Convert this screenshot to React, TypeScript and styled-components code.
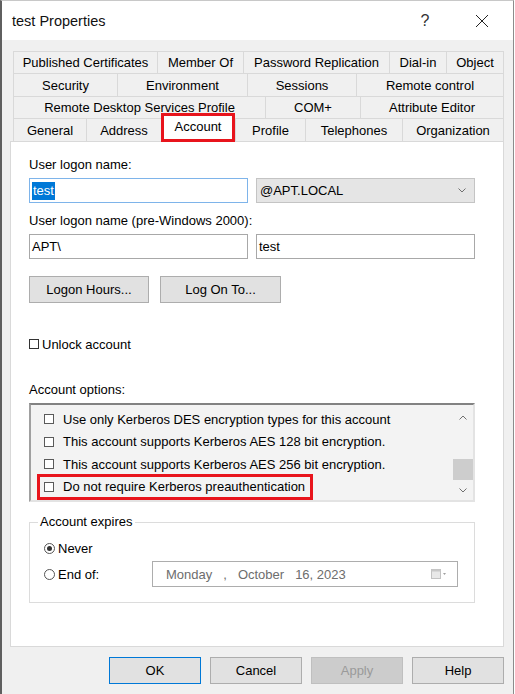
import React from "react";
import styled, { createGlobalStyle } from "styled-components";

const GlobalStyle = createGlobalStyle`
  html, body {
    margin: 0;
    padding: 0;
    background: #fff;
  }
  body {
    font-family: "Liberation Sans", Arial, sans-serif;
    font-size: 13px;
    color: #000;
  }
  * {
    box-sizing: border-box;
  }
`;

const Window = styled.div`
  width: 514px;
  height: 694px;
  display: flex;
  flex-direction: column;
  background: #f0f0f0;
  border-top: 1px solid #c8c8c8;
  border-left: 2px solid #5f5f5f;
  border-right: 1px solid #8c8c8c;
`;

const TitleBar = styled.div`
  height: 39px;
  flex-shrink: 0;
  display: flex;
  align-items: center;
  background: #fff;
  padding-left: 10px;
`;

const TitleText = styled.div`
  flex: 1;
  font-size: 14.5px;
  color: #111;
`;

const CaptionButtons = styled.div`
  display: flex;
  gap: 11px;
  margin-right: 8px;
`;

const CaptionButton = styled.div`
  width: 46px;
  height: 30px;
  display: flex;
  align-items: center;
  justify-content: center;
  font-size: 16px;
  color: #333;
`;

const Body = styled.div`
  flex: 1;
  display: flex;
  flex-direction: column;
  padding: 11px 9px 10px 8px;
`;

const TabStrip = styled.div`
  display: grid;
  grid-template-rows: 22px 23px 22px 23px;
  margin: 0 0 0 3px;
`;

const TabRow = styled.div`
  display: flex;
`;

const Tab = styled.div<{ $w?: number; $active?: boolean }>`
  ${(p) => (p.$w ? `width: ${p.$w}px;` : "flex: 1;")}
  display: flex;
  align-items: center;
  justify-content: center;
  white-space: nowrap;
  border-top: 1px solid #d9d9d9;
  border-left: 1px solid #d9d9d9;
  &:last-child {
    border-right: 1px solid #d9d9d9;
  }
  ${(p) =>
    p.$active &&
    `
    position: relative;
    z-index: 2;
    align-self: flex-start;
    height: 29px;
    margin-top: -5px;
    padding-bottom: 3px;
    background: #fff;
    border: 3px solid #e8141c;
  `}
`;

const Panel = styled.div`
  flex: 1;
  display: flex;
  flex-direction: column;
  background: #fff;
  border: 1px solid #d9d9d9;
  padding: 15px 28px 0 18px;
`;

const FieldLabel = styled.div<{ $top?: number }>`
  line-height: 16px;
  height: 16px;
  margin-top: ${(p) => p.$top ?? 0}px;
  margin-bottom: 5px;
`;

const FieldRow = styled.div`
  display: grid;
  grid-template-columns: 1fr 1fr;
  gap: 8px;
  height: 25px;
`;

const TextBox = styled.div<{ $focused?: boolean }>`
  display: flex;
  align-items: center;
  padding-left: 2px;
  border: 1px solid ${(p) => (p.$focused ? "#7eb4ea" : "#a8a8a8")};
  background: #fff;
`;

const Selected = styled.span`
  background: #0078d7;
  color: #fff;
  line-height: 18px;
  padding: 0 1px;
`;

const ComboBox = styled.div`
  display: flex;
  align-items: center;
  justify-content: space-between;
  padding: 0 8px 0 3px;
  border: 1px solid #c4c4c4;
  background: #e5e5e5;
`;

const ButtonRow = styled.div`
  display: flex;
  gap: 11px;
  margin-top: 17px;
`;

const PushButton = styled.div<{ $w: number; $default?: boolean; $disabled?: boolean }>`
  width: ${(p) => p.$w}px;
  height: 27px;
  display: flex;
  align-items: center;
  justify-content: center;
  background: ${(p) => (p.$disabled ? "#cccccc" : "#e1e1e1")};
  color: ${(p) => (p.$disabled ? "#9a9a9a" : "#000")};
  border: 1px solid
    ${(p) => (p.$default ? "#0078d7" : p.$disabled ? "#bfbfbf" : "#adadad")};
`;

const CheckLine = styled.div<{ $top?: number }>`
  display: flex;
  align-items: center;
  gap: 3px;
  height: 16px;
  margin-top: ${(p) => p.$top ?? 0}px;
`;

const CheckBox = styled.span<{ $light?: boolean }>`
  width: 10px;
  height: 10px;
  flex-shrink: 0;
  background: #fff;
  border: 1px solid ${(p) => (p.$light ? "#5a5a5a" : "#333")};
`;

const ListBox = styled.div`
  height: 99px;
  display: flex;
  background: #f3f3f3;
  border-style: solid;
  border-width: 2px;
  border-color: #828282 #e3e3e3 #e3e3e3 #a0a0a0;
`;

const ListItems = styled.div`
  flex: 1;
  padding-top: 3px;
  overflow: hidden;
`;

const OptionItem = styled.div<{ $marked?: boolean }>`
  height: 22.5px;
  width: fit-content;
  display: flex;
  align-items: center;
  gap: 9px;
  margin-left: 8px;
  padding: 0 6px 0 5px;
  white-space: nowrap;
  outline: ${(p) => (p.$marked ? "3px solid #e8141c" : "none")};
  outline-offset: -1px;
`;

const ScrollBar = styled.div`
  width: 20px;
  display: flex;
  flex-direction: column;
`;

const ScrollArrow = styled.div<{ $h: number }>`
  height: ${(p) => p.$h}px;
  display: flex;
  align-items: center;
  justify-content: center;
`;

const ScrollTrack = styled.div`
  flex: 1;
  display: flex;
  flex-direction: column;
  justify-content: flex-end;
`;

const ScrollThumb = styled.div`
  height: 21px;
  background: #cdcdcd;
`;

const GroupBox = styled.fieldset`
  margin: 12px 0 0 0;
  padding: 0;
  min-width: 0;
  border: 1px solid #dcdcdc;
`;

const GroupLegend = styled.legend`
  margin-left: 8px;
  padding: 0 2px;
  line-height: 16px;
`;

const GroupContent = styled.div`
  padding: 10px 16px 15px 14px;
`;

const RadioLine = styled.div<{ $top?: number; $h: number }>`
  display: flex;
  align-items: center;
  height: ${(p) => p.$h}px;
  margin-top: ${(p) => p.$top ?? 0}px;
`;

const RadioLabel = styled.div<{ $w?: number }>`
  display: flex;
  align-items: center;
  gap: 3px;
  ${(p) => p.$w && `width: ${p.$w}px; flex-shrink: 0;`}
`;

const Radio = styled.span<{ $checked?: boolean }>`
  width: 11px;
  height: 11px;
  border-radius: 50%;
  border: 1px solid #555;
  background: #fff;
  display: flex;
  align-items: center;
  justify-content: center;
  &::after {
    content: "";
    width: 5px;
    height: 5px;
    border-radius: 50%;
    background: ${(p) => (p.$checked ? "#333" : "transparent")};
  }
`;

const DatePicker = styled.div`
  flex: 1;
  height: 26px;
  display: flex;
  align-items: center;
  gap: 11px;
  padding: 0 10px 0 13px;
  border: 1px solid #adadad;
  background: #fff;
  color: #6d6d6d;
`;

const CalendarIcon = styled.svg`
  margin-left: auto;
`;

const DialogButtons = styled.div`
  display: flex;
  justify-content: flex-end;
  gap: 9px;
  margin-top: 10px;
`;

const tabRows: { label: string; w?: number; active?: boolean }[][] = [
  [
    { label: "Published Certificates", w: 144 },
    { label: "Member Of", w: 86 },
    { label: "Password Replication", w: 146 },
    { label: "Dial-in", w: 57 },
    { label: "Object" },
  ],
  [
    { label: "Security", w: 104 },
    { label: "Environment", w: 130 },
    { label: "Sessions", w: 109 },
    { label: "Remote control" },
  ],
  [
    { label: "Remote Desktop Services Profile", w: 252 },
    { label: "COM+", w: 95 },
    { label: "Attribute Editor" },
  ],
  [
    { label: "General", w: 73 },
    { label: "Address", w: 75 },
    { label: "Account", w: 74, active: true },
    { label: "Profile", w: 70 },
    { label: "Telephones", w: 97 },
    { label: "Organization" },
  ],
];

const accountOptions = [
  "Use only Kerberos DES encryption types for this account",
  "This account supports Kerberos AES 128 bit encryption.",
  "This account supports Kerberos AES 256 bit encryption.",
  "Do not require Kerberos preauthentication",
];

const Chevron = ({ up }: { up?: boolean }) => (
  <svg width="8" height="5" viewBox="0 0 8 5">
    <path
      d={up ? "M0.5 4.5 L4 1 L7.5 4.5" : "M0.5 0.5 L4 4 L7.5 0.5"}
      fill="none"
      stroke="#707070"
      strokeWidth="1"
    />
  </svg>
);

export default function App() {
  return (
    <>
      <GlobalStyle />
      <Window>
        <TitleBar>
          <TitleText>test Properties</TitleText>
          <CaptionButtons>
            <CaptionButton>?</CaptionButton>
            <CaptionButton>
              <svg width="14" height="14" viewBox="0 0 14 14">
                <path d="M1 1 L13 13 M13 1 L1 13" stroke="#222" strokeWidth="1" />
              </svg>
            </CaptionButton>
          </CaptionButtons>
        </TitleBar>

        <Body>
          <TabStrip>
            {tabRows.map((row, i) => (
              <TabRow key={i}>
                {row.map((t) => (
                  <Tab key={t.label} $w={t.w} $active={t.active}>
                    {t.label}
                  </Tab>
                ))}
              </TabRow>
            ))}
          </TabStrip>

          <Panel>
            <FieldLabel>User logon name:</FieldLabel>
            <FieldRow>
              <TextBox $focused>
                <Selected>test</Selected>
              </TextBox>
              <ComboBox>
                <span>@APT.LOCAL</span>
                <Chevron />
              </ComboBox>
            </FieldRow>

            <FieldLabel $top={10}>User logon name (pre-Windows 2000):</FieldLabel>
            <FieldRow>
              <TextBox>APT\</TextBox>
              <TextBox>test</TextBox>
            </FieldRow>

            <ButtonRow>
              <PushButton $w={120}>Logon Hours...</PushButton>
              <PushButton $w={121}>Log On To...</PushButton>
            </ButtonRow>

            <CheckLine $top={33}>
              <CheckBox />
              <span>Unlock account</span>
            </CheckLine>

            <FieldLabel $top={30}>Account options:</FieldLabel>
            <ListBox>
              <ListItems>
                {accountOptions.map((o, i) => (
                  <OptionItem key={o} $marked={i === accountOptions.length - 1}>
                    <CheckBox $light />
                    <span>{o}</span>
                  </OptionItem>
                ))}
              </ListItems>
              <ScrollBar>
                <ScrollArrow $h={24}>
                  <Chevron up />
                </ScrollArrow>
                <ScrollTrack>
                  <ScrollThumb />
                </ScrollTrack>
                <ScrollArrow $h={20}>
                  <Chevron />
                </ScrollArrow>
              </ScrollBar>
            </ListBox>

            <GroupBox>
              <GroupLegend>Account expires</GroupLegend>
              <GroupContent>
                <RadioLine $h={16}>
                  <RadioLabel>
                    <Radio $checked />
                    <span>Never</span>
                  </RadioLabel>
                </RadioLine>
                <RadioLine $h={26} $top={5}>
                  <RadioLabel $w={108}>
                    <Radio />
                    <span>End of:</span>
                  </RadioLabel>
                  <DatePicker>
                    <span>Monday</span>
                    <span>,</span>
                    <span>October</span>
                    <span>16, 2023</span>
                    <CalendarIcon width="16" height="12" viewBox="0 0 16 12">
                      <rect x="0.5" y="1.5" width="9" height="9" fill="#e8e8e8" stroke="#c2c2c2" />
                      <rect x="0.5" y="1.5" width="9" height="2" fill="#c8c8c8" />
                      <path d="M12 5 L15 5 L13.5 7 Z" fill="#a0a0a0" />
                    </CalendarIcon>
                  </DatePicker>
                </RadioLine>
              </GroupContent>
            </GroupBox>
          </Panel>

          <DialogButtons>
            <PushButton $w={92} $default>OK</PushButton>
            <PushButton $w={92}>Cancel</PushButton>
            <PushButton $w={92} $disabled>Apply</PushButton>
            <PushButton $w={92}>Help</PushButton>
          </DialogButtons>
        </Body>
      </Window>
    </>
  );
}
